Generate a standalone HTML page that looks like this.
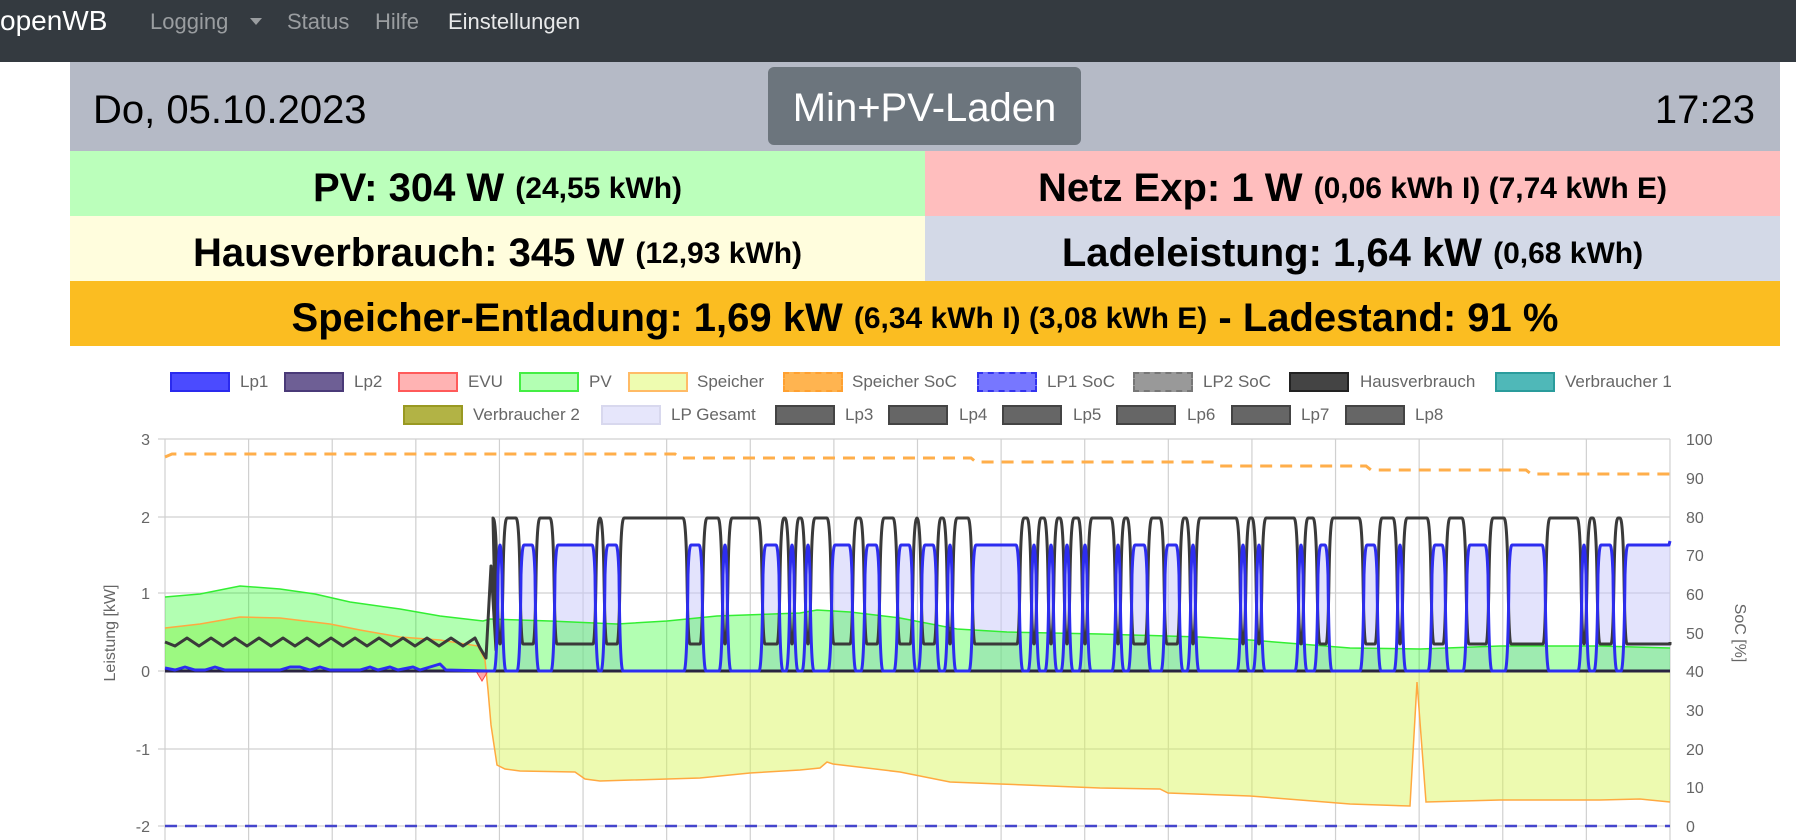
<!DOCTYPE html>
<html><head><meta charset="utf-8"><style>
*{margin:0;padding:0;box-sizing:border-box}
body{width:1796px;height:840px;overflow:hidden;background:#fff;font-family:"Liberation Sans",sans-serif;position:relative}
.nav{position:absolute;left:0;top:0;width:1796px;height:62px;background:#343a40}
.nav span{position:absolute;top:9px;font-size:22px;color:#9a9da0}
.hdr{position:absolute;left:70px;top:62px;width:1710px;height:89px;background:#b5bac6}
.row{position:absolute;height:65px;display:flex;align-items:center;justify-content:center;font-weight:bold;font-size:40px;color:#000;white-space:nowrap;padding-top:10px}
.row small{font-size:30px}
.lg{position:absolute;width:60px;height:20px;border:2px solid}
.lt{position:absolute;font-size:17px;color:#666;line-height:20px}
</style></head><body>
<div class="nav">
<span style="left:0;top:5px;font-size:28px;color:#fff">openWB</span>
<span style="left:150px">Logging</span>
<svg style="position:absolute;left:250px;top:18px" width="12" height="8"><path d="M0 0H12L6 7Z" fill="#9a9da0"/></svg>
<span style="left:287px">Status</span>
<span style="left:375px">Hilfe</span>
<span style="left:448px;color:#e8e9ea">Einstellungen</span>
</div>
<div class="hdr">
<div style="position:absolute;left:23px;top:26px;font-size:40px">Do, 05.10.2023</div>
<div style="position:absolute;left:698px;top:5px;width:313px;height:78px;background:#6c757d;border-radius:6px;color:#fff;font-size:40px;text-align:center;line-height:82px">Min+PV-Laden</div>
<div style="position:absolute;right:25px;top:26px;font-size:40px">17:23</div>
</div>
<div class="row" style="left:70px;top:151px;width:855px;background:#bbffbb">PV: 304 W&nbsp;<small>(24,55 kWh)</small></div>
<div class="row" style="left:925px;top:151px;width:855px;background:#ffbebe">Netz Exp: 1 W&nbsp;<small>(0,06 kWh I) (7,74 kWh E)</small></div>
<div class="row" style="left:70px;top:216px;width:855px;background:#fffddd">Hausverbrauch: 345 W&nbsp;<small>(12,93 kWh)</small></div>
<div class="row" style="left:925px;top:216px;width:855px;background:#d3d9e7">Ladeleistung: 1,64 kW&nbsp;<small>(0,68 kWh)</small></div>
<div class="row" style="left:70px;top:281px;width:1710px;height:65px;background:#fbbd21">Speicher-Entladung: 1,69 kW&nbsp;<small>(6,34 kWh I) (3,08 kWh E)</small>&nbsp;- Ladestand: 91 %</div>

<div class="lg" style="left:170px;top:372px;background:#4b4bff;border-color:#2a2aee"></div><div class="lt" style="left:240px;top:372px">Lp1</div>
<div class="lg" style="left:284px;top:372px;background:#6e5f95;border-color:#4a3a78"></div><div class="lt" style="left:354px;top:372px">Lp2</div>
<div class="lg" style="left:398px;top:372px;background:#ffb3b3;border-color:#ff5a5a"></div><div class="lt" style="left:468px;top:372px">EVU</div>
<div class="lg" style="left:519px;top:372px;background:#b3ffb3;border-color:#44ee44"></div><div class="lt" style="left:589px;top:372px">PV</div>
<div class="lg" style="left:628px;top:372px;background:#eefcb0;border-color:#ffbb66"></div><div class="lt" style="left:697px;top:372px">Speicher</div>
<div class="lg" style="left:783px;top:372px;background:#ffb450;border:2px dashed #ffa030"></div><div class="lt" style="left:852px;top:372px">Speicher SoC</div>
<div class="lg" style="left:977px;top:372px;background:#7777ff;border:2px dashed #3333ee"></div><div class="lt" style="left:1047px;top:372px">LP1 SoC</div>
<div class="lg" style="left:1133px;top:372px;background:#999;border:2px dashed #777"></div><div class="lt" style="left:1203px;top:372px">LP2 SoC</div>
<div class="lg" style="left:1289px;top:372px;background:#444;border-color:#222"></div><div class="lt" style="left:1360px;top:372px">Hausverbrauch</div>
<div class="lg" style="left:1495px;top:372px;background:#4fb8b8;border-color:#2a9c9c"></div><div class="lt" style="left:1565px;top:372px">Verbraucher 1</div>

<div class="lg" style="left:403px;top:405px;background:#b2b345;border-color:#999922"></div><div class="lt" style="left:473px;top:405px">Verbraucher 2</div>
<div class="lg" style="left:601px;top:405px;background:#e6e6fb;border-color:#d8d8ee"></div><div class="lt" style="left:671px;top:405px">LP Gesamt</div>
<div class="lg" style="left:775px;top:405px;background:#666;border-color:#444"></div><div class="lt" style="left:845px;top:405px">Lp3</div>
<div class="lg" style="left:888px;top:405px;background:#666;border-color:#444"></div><div class="lt" style="left:959px;top:405px">Lp4</div>
<div class="lg" style="left:1002px;top:405px;background:#666;border-color:#444"></div><div class="lt" style="left:1073px;top:405px">Lp5</div>
<div class="lg" style="left:1116px;top:405px;background:#666;border-color:#444"></div><div class="lt" style="left:1187px;top:405px">Lp6</div>
<div class="lg" style="left:1231px;top:405px;background:#666;border-color:#444"></div><div class="lt" style="left:1301px;top:405px">Lp7</div>
<div class="lg" style="left:1345px;top:405px;background:#666;border-color:#444"></div><div class="lt" style="left:1415px;top:405px">Lp8</div>

<svg id="ch" style="position:absolute;left:0;top:0" width="1796" height="840">
<defs>
<clipPath id="up"><rect x="0" y="0" width="1796" height="671"/></clipPath>
<clipPath id="dn"><rect x="0" y="671" width="1796" height="200"/></clipPath>
</defs>
<g id="grid" stroke="#d0d0d0" stroke-width="1.2"></g>
<path id="lav" fill="rgba(200,200,250,0.5)" stroke="none"/>
<path id="pvf" fill="rgba(0,255,0,0.3)" stroke="none"/>
<path id="spf" fill="rgba(215,245,80,0.45)" stroke="none" clip-path="url(#dn)"/>
<path id="spf2" fill="rgba(120,240,50,0.38)" stroke="none" clip-path="url(#up)"/>
<path id="pvl" fill="none" stroke="#33ee33" stroke-width="1.5"/>
<path id="spl" fill="none" stroke="#ffa940" stroke-width="1.5"/>
<path d="M476,671 L482,681 L488,671" fill="rgba(255,80,80,0.5)" stroke="#ff4444" stroke-width="1"/>
<line x1="165" y1="671" x2="1670" y2="671" stroke="#2a2440" stroke-width="3"/>
<path id="blk" fill="none" stroke="#3a3a3a" stroke-width="3" stroke-linejoin="round"/>
<path id="blu" fill="none" stroke="#2d2df0" stroke-width="3" stroke-linejoin="round"/>
<path id="soc" fill="none" stroke="#ffae4a" stroke-width="3" stroke-dasharray="12,8"/>
<line x1="165" y1="826" x2="1670" y2="826" stroke="#4444cc" stroke-width="2.5" stroke-dasharray="12,8"/>
<g font-family="Liberation Sans,sans-serif" font-size="16" fill="#666">
<text x="150" y="445" text-anchor="end">3</text>
<text x="150" y="523" text-anchor="end">2</text>
<text x="150" y="599" text-anchor="end">1</text>
<text x="150" y="677" text-anchor="end">0</text>
<text x="150" y="755" text-anchor="end">-1</text>
<text x="150" y="832" text-anchor="end">-2</text>
<text x="1686" y="445">100</text><text x="1686" y="484">90</text><text x="1686" y="523">80</text>
<text x="1686" y="561">70</text><text x="1686" y="600">60</text><text x="1686" y="639">50</text>
<text x="1686" y="677">40</text><text x="1686" y="716">30</text><text x="1686" y="755">20</text>
<text x="1686" y="793">10</text><text x="1686" y="832">0</text>
<text transform="translate(115,633) rotate(-90)" text-anchor="middle">Leistung [kW]</text>
<text transform="translate(1735,633) rotate(90)" text-anchor="middle">SoC [%]</text>
</g>
</svg>
<script>
(function(){
var g=document.getElementById('grid'),s='';
[439,517,593,671,749,826].forEach(function(y){s+='<line x1="158" y1="'+y+'" x2="1670" y2="'+y+'"/>';});
for(var i=0;i<=18;i++){var x=165+i*83.61;s+='<line x1="'+x+'" y1="439" x2="'+x+'" y2="840"/>';}
g.innerHTML=s;
var ints=[[500,500],[523,533],[557,593],[607,617],[690,700],[725,725],[765,777],[792,792],[808,808],[834,850],[867,877],[900,910],[924,934],[950,950],[975,1017],[1034,1034],[1051,1051],[1067,1067],[1085,1085],[1118,1118],[1134,1145],[1167,1177],[1193,1193],[1243,1243],[1259,1259],[1301,1301],[1320,1326],[1366,1375],[1400,1400],[1434,1443],[1469,1486],[1511,1543],[1584,1584],[1600,1611],[1627,1670]];
var H=545,Z=671;
var b='M165,668 L175,670 L185,667 L195,670 L205,670 L215,667 L225,670 L280,670 L290,667 L300,667 L310,670 L320,667 L330,670 L360,670 L370,667 L378,670 L390,667 L398,670 L413,667 L420,670 L440,664 L446,670 L488,671';
ints.forEach(function(v){var a=v[0],e=v[1];
 b+=' L'+(a-6)+','+Z+' Q'+(a-3)+','+Z+' '+(a-2)+','+(H+30)+' Q'+(a-1)+','+H+' '+(a+(e>a?1:0))+','+H;
 if(e>a)b+=' L'+(e-1)+','+H;
 if(e<1670)b+=' Q'+(e+1)+','+H+' '+(e+2)+','+(H+30)+' Q'+(e+3)+','+Z+' '+(e+6)+','+Z;
 else b+=' L1670,541';});
document.getElementById('blu').setAttribute('d',b);
document.getElementById('lav').setAttribute('d',b+' L1670,671 L165,671 Z');
var k='M165,642';
for(var x=175;x<=475;x+=12){k+=' L'+x+','+((x/12|0)%2?638:646);}
k+=' L480,648 L486,658 L491,566 L496,650';
var HB=518,LB=644;
ints.forEach(function(v){var a=v[0],e=v[1];
 k+=' L'+(a-7)+','+HB+' Q'+(a-4)+','+HB+' '+(a-3)+','+(HB+60)+' Q'+(a-2)+','+LB+' '+(a)+','+LB;
 if(e>a)k+=' L'+e+','+LB;
 if(e<1670)k+=' Q'+(e+2)+','+LB+' '+(e+3)+','+(HB+60)+' Q'+(e+4)+','+HB+' '+(e+7)+','+HB;});
k+=' L1670,642';
document.getElementById('blk').setAttribute('d',k);
var pv=[[165,597],[200,594],[240,586],[280,589],[315,594],[350,602],[400,609],[440,616],[483,621],[490,619],[550,621],[617,624],[667,621],[717,616],[800,613],[817,610],[850,612],[900,618],[957,629],[1007,632],[1100,634],[1200,637],[1250,640],[1300,644],[1350,648],[1420,649],[1500,646],[1600,646],[1670,648]];
var p='M'+pv.map(function(q){return q.join(',')}).join(' L');
document.getElementById('pvl').setAttribute('d',p);
document.getElementById('pvf').setAttribute('d',p+' L1670,671 L165,671 Z');
var sp=[[165,628],[200,624],[240,617],[280,618],[330,624],[360,630],[400,637],[440,640],[478,646],[485,660],[488,690],[491,725],[497,765],[505,769],[520,771],[575,772],[585,779],[600,781],[700,778],[750,773],[800,770],[820,768],[827,762],[833,764],[900,772],[950,782],[1000,784],[1050,786],[1100,788],[1160,789],[1168,793],[1250,796],[1300,800],[1350,804],[1410,806],[1417,682],[1426,802],[1500,800],[1600,800],[1640,799],[1670,802]];
var q='M'+sp.map(function(r){return r.join(',')}).join(' L');
document.getElementById('spl').setAttribute('d',q);
document.getElementById('spf').setAttribute('d',q+' L1670,671 L165,671 Z');
document.getElementById('spf2').setAttribute('d',q+' L1670,671 L165,671 Z');
document.getElementById('soc').setAttribute('d','M165,457 L172,454 L675,454 L680,458 L971,458 L976,462 L1214,462 L1219,466 L1366,466 L1371,470 L1526,470 L1531,474 L1670,474');
})();
</script>
</body></html>
